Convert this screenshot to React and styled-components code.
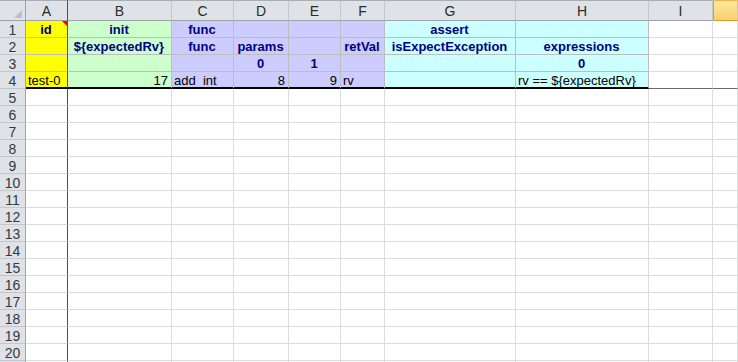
import React from "react";
import styled, { createGlobalStyle } from "styled-components";

const GlobalStyle = createGlobalStyle`
  html, body {
    margin: 0;
    padding: 0;
    background: #ffffff;
    overflow: hidden;
  }
  body {
    font-family: "Liberation Sans", Arial, sans-serif;
  }
`;

const COLUMNS = [
  { key: "A", width: 42 },
  { key: "B", width: 104 },
  { key: "C", width: 62 },
  { key: "D", width: 55 },
  { key: "E", width: 52 },
  { key: "F", width: 44 },
  { key: "G", width: 131 },
  { key: "H", width: 133 },
  { key: "I", width: 64 },
  { key: "J", width: null },
];

const FILLS = {
  A: "#ffff00",
  B: "#ccffcc",
  C: "#ccccff",
  D: "#ccccff",
  E: "#ccccff",
  F: "#ccccff",
  G: "#ccffff",
  H: "#ccffff",
};

// header rows 1-3 are bold and centered, row 4 holds the test case
const CELLS = {
  1: { A: "id", B: "init", C: "func", G: "assert" },
  2: {
    B: "${expectedRv}",
    C: "func",
    D: "params",
    F: "retVal",
    G: "isExpectException",
    H: "expressions",
  },
  3: { D: "0", E: "1", H: "0" },
  4: {
    A: ["test-0", "left"],
    B: ["17", "right"],
    C: ["add_int", "left"],
    D: ["8", "right"],
    E: ["9", "right"],
    F: ["rv", "left"],
    H: ["rv == ${expectedRv}", "left"],
  },
};

const ROW_COUNT = 21; // the 21st row only peeks in at the bottom edge
const VISIBLE_ROWS = 20;
const DATA_ROWS = 4;

export default function App() {
  const rows = Array.from({ length: ROW_COUNT }, (_, i) => i + 1);

  return (
    <>
      <GlobalStyle />
      <Sheet>
        <Corner />
        {COLUMNS.map((col) => (
          <ColHeader
            key={col.key}
            $selected={col.key === "J"}
            $frozen={col.key === "A"}
          >
            {col.key === "J" ? "" : col.key}
          </ColHeader>
        ))}

        {rows.map((row) => (
          <React.Fragment key={row}>
            <RowHeader>{row <= VISIBLE_ROWS ? row : ""}</RowHeader>
            {COLUMNS.map((col) => {
              const inData = row <= DATA_ROWS && FILLS[col.key];
              const raw = CELLS[row] && CELLS[row][col.key];
              const isCase = row === DATA_ROWS;
              const text = Array.isArray(raw) ? raw[0] : raw;
              const align = Array.isArray(raw) ? raw[1] : "center";
              return (
                <Cell
                  key={col.key}
                  $fill={inData ? FILLS[col.key] : null}
                  $align={align}
                  $bold={row < DATA_ROWS}
                  $frozen={col.key === "A"}
                  $thick={isCase && !!FILLS[col.key]}
                  $freezeRow={isCase}
                  $comment={row === 1 && col.key === "A"}
                >
                  {text}
                </Cell>
              );
            })}
          </React.Fragment>
        ))}
      </Sheet>
    </>
  );
}

const Sheet = styled.div`
  display: grid;
  grid-template-columns: 26px 42px 104px 62px 55px 52px 44px 131px 133px 64px 1fr;
  grid-template-rows: 21px repeat(${ROW_COUNT}, 17px);
  width: 738px;
  height: 362px;
  overflow: hidden;
  background: #ffffff;
`;

const Corner = styled.div`
  position: relative;
  box-sizing: border-box;
  background: #dfe3e8;
  border-top: 1px solid #a9aeb5;
  border-right: 1px solid #9ea3aa;
  border-bottom: 1px solid #9ea3aa;

  &::after {
    content: "";
    position: absolute;
    right: 3px;
    bottom: 2px;
    width: 0;
    height: 0;
    border-left: 8px solid transparent;
    border-bottom: 8px solid #bcc1c8;
  }
`;

const ColHeader = styled.div`
  box-sizing: border-box;
  display: flex;
  align-items: center;
  justify-content: center;
  background: ${({ $selected }) =>
    $selected ? "linear-gradient(#fde89d, #f9d26a)" : "#dfe3e8"};
  border-top: 1px solid ${({ $selected }) => ($selected ? "#f2b24c" : "#a9aeb5")};
  border-right: 1px solid
    ${({ $frozen }) => ($frozen ? "#4f4f4f" : "#c2c7ce")};
  border-bottom: 1px solid
    ${({ $selected }) => ($selected ? "#e09a32" : "#9ea3aa")};
  border-left: ${({ $selected }) => ($selected ? "1px solid #e39b2d" : "none")};
  color: #2b2b2b;
  font-size: 14px;
  line-height: 19px;
  padding-top: 1px;
`;

const RowHeader = styled.div`
  box-sizing: border-box;
  display: flex;
  align-items: center;
  justify-content: center;
  background: #dfe3e8;
  border-right: 1px solid #9ea3aa;
  border-bottom: 1px solid #c2c7ce;
  color: #333842;
  font-size: 14px;
  line-height: 16px;
  padding-top: 2px;
`;

const Cell = styled.div`
  position: relative;
  box-sizing: border-box;
  overflow: hidden;
  white-space: nowrap;
  padding: 1px 3px 0 2px;
  background: ${({ $fill }) => $fill || "#ffffff"};
  border-right: 1px solid
    ${({ $frozen, $fill }) =>
      $frozen ? "#4f4f4f" : $fill ? "#bdbdbd" : "#dadcdd"};
  border-bottom: ${({ $thick, $freezeRow, $fill }) =>
    $thick
      ? "2px solid #000000"
      : $freezeRow
      ? "1px solid #6a6a6a"
      : `1px solid ${$fill ? "#bdbdbd" : "#dadcdd"}`};
  text-align: ${({ $align }) => $align};
  font-size: 13px;
  line-height: 16px;
  font-weight: ${({ $bold }) => ($bold ? 700 : 400)};
  color: ${({ $bold }) => ($bold ? "#000080" : "#000000")};

  &::after {
    content: "";
    display: ${({ $comment }) => ($comment ? "block" : "none")};
    position: absolute;
    top: 0;
    right: 0;
    width: 0;
    height: 0;
    border-left: 5px solid transparent;
    border-top: 5px solid #ff0000;
  }
`;
